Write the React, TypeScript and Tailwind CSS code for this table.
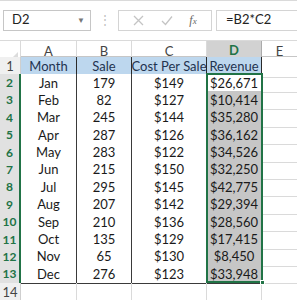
import { Fragment } from 'react';

const rows = [
  ['Jan', '179', '$149', '$26,671'],
  ['Feb', '82', '$127', '$10,414'],
  ['Mar', '245', '$144', '$35,280'],
  ['Apr', '287', '$126', '$36,162'],
  ['May', '283', '$122', '$34,526'],
  ['Jun', '215', '$150', '$32,250'],
  ['Jul', '295', '$145', '$42,775'],
  ['Aug', '207', '$142', '$29,394'],
  ['Sep', '210', '$136', '$28,560'],
  ['Oct', '135', '$129', '$17,415'],
  ['Nov', '65', '$130', '$8,450'],
  ['Dec', '276', '$123', '$33,948'],
];

const cols = 'grid grid-cols-[21px_56px_55px_75px_55px_1fr]';
const font = { fontFamily: 'Lato, "Open Sans", sans-serif' };

export default function App() {
  return (
    <div className="w-[297px] h-[300px] overflow-hidden bg-white border-t border-[#dadada] text-[13px] text-[#1a1a1a]" style={font}>
      {/* formula bar */}
      <div className="flex items-center h-[37px] pt-[1px]">
        <div className="ml-[3px] w-[88px] h-[21px] border border-[#c6c6c6] flex items-center justify-between pl-[8px] pr-[5px]">
          <span className="text-[13px] text-[#222]">D2</span>
          <span className="text-[8px] text-[#777]">▼</span>
        </div>
        <div className="w-[27px] flex justify-center text-[#c0c0c0] text-[12px] leading-none">⋮</div>
        <div className="w-[94px] h-[21px] border border-[#d4d4d4] flex items-center justify-around px-[6px] text-[#bdbdbd]">
          <svg width="11" height="11" viewBox="0 0 11 11"><path d="M1 1L10 10M10 1L1 10" stroke="#c4c4c4" strokeWidth="1.3" /></svg>
          <svg width="12" height="11" viewBox="0 0 12 11"><path d="M1 6L4.5 9.5L11 1.5" stroke="#c4c4c4" strokeWidth="1.3" fill="none" /></svg>
          <span className="italic text-[12px] text-[#666]" style={{ fontFamily: '"Liberation Serif", serif' }}>f<span className="text-[9px]">x</span></span>
        </div>
        <div className="ml-[4px] flex-1 h-[21px] border border-r-0 border-[#d4d4d4] flex items-center pl-[9px] text-[13px] text-[#222]">=B2*C2</div>
      </div>

      {/* column headers */}
      <div className={`${cols} h-[17px] mt-[2px] border-t border-[#dadada] border-b border-b-[#c6c6c6] text-[#444]`}>
        <div className="relative border-r border-[#dadada] bg-white">
          <div className="absolute right-[2px] bottom-[2px] w-0 h-0 border-l-[9px] border-l-transparent border-b-[9px] border-b-[#dcdcdc]" />
        </div>
        {['A', 'B', 'C'].map(c => (
          <div key={c} className="flex items-center justify-center border-r border-[#dadada]">{c}</div>
        ))}
        <div className="flex items-center justify-center bg-[#d2d2d2] border-r border-[#ababab] border-b-2 border-b-[#217346] font-bold text-[#217346]">D</div>
        <div className="flex items-center justify-center">E</div>
      </div>

      {/* grid */}
      <div className="relative">
        <div className={`${cols} h-[17px]`}>
          <div className="flex items-center justify-center bg-[#f0f0f0] border-r border-b border-[#cfcfcf] text-[#444]">1</div>
          {['Month', 'Sale', 'Cost Per Sale', 'Revenue'].map(h => (
            <div key={h} className="flex items-center justify-center bg-[#bdd7ee] border-r border-b border-[#2a2a2a] text-[#1f3350] whitespace-nowrap">{h}</div>
          ))}
          <div className="border-b border-[#dadada]" />
        </div>
        {rows.map((r, i) => (
          <div key={i} className={`${cols} h-[17.4px]`}>
            <div className="flex items-center justify-center bg-[#e1e1e1] border-r-2 border-r-[#217346] border-b border-b-[#cfcfcf] font-bold text-[#217346] text-[12px]">{i + 2}</div>
            {r.map((v, j) => (
              <Fragment key={j}>
                <div className={`flex items-center justify-center border-r border-b border-[#3a3a3a] leading-none ${j === 3 ? (i === 0 ? 'bg-white' : 'bg-[#c6c6c6]') : 'bg-white'}`}>{v}</div>
              </Fragment>
            ))}
            <div className="border-b border-[#dadada]" />
          </div>
        ))}
        <div className={`${cols} h-[18px]`}>
          <div className="flex items-center justify-center bg-[#f0f0f0] border-r border-[#cfcfcf] text-[#444]">14</div>
          <div className="border-r border-[#dadada]" />
          <div className="border-r border-[#dadada]" />
          <div className="border-r border-[#dadada]" />
          <div className="border-r border-[#dadada]" />
          <div />
        </div>

        {/* selection outline D2:D13 */}
        <div className="absolute left-[206px] top-[16px] w-[57px] h-[210px] border-2 border-[#217346] pointer-events-none">
          <div className="absolute -right-[4px] -bottom-[4px] w-[5px] h-[5px] bg-[#217346] border border-white" />
        </div>
      </div>
    </div>
  );
}
